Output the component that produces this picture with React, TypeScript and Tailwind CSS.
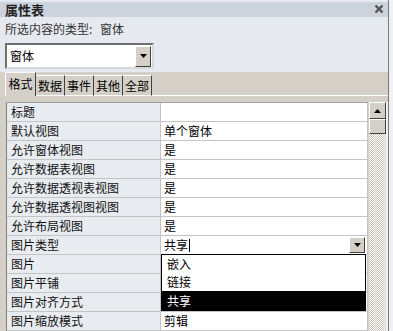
import React from "react";

const rows: [string, string][] = [
  ["标题", ""],
  ["默认视图", "单个窗体"],
  ["允许窗体视图", "是"],
  ["允许数据表视图", "是"],
  ["允许数据透视表视图", "是"],
  ["允许数据透视图视图", "是"],
  ["允许布局视图", "是"],
  ["图片类型", "共享"],
  ["图片", ""],
  ["图片平铺", ""],
  ["图片对齐方式", ""],
  ["图片缩放模式", "剪辑"],
];

const tabs = ["格式", "数据", "事件", "其他", "全部"];

function DownTri() {
  return (
    <svg width="7" height="4" viewBox="0 0 7 4">
      <path d="M0 0H7L3.5 4Z" fill="#000" />
    </svg>
  );
}

export default function App() {
  return (
    <div
      className="relative w-[393px] h-[331px] overflow-hidden bg-[#e6e9ef] flex text-[12px] leading-none text-black"
      style={{ fontFamily: '"Noto Sans CJK SC", "Noto Sans", sans-serif' }}
    >
      <div className="w-[388px] flex flex-col">
        {/* title bar */}
        <div className="mt-[2px] h-[15px] bg-[#ccd3dc] flex items-center justify-between pl-[5px] pr-[4px]">
          <span className="font-bold text-[13px] text-[#222]">属性表</span>
          <svg width="10" height="10" viewBox="0 0 10 10">
            <path d="M1.5 1.5L8.5 8.5M8.5 1.5L1.5 8.5" stroke="#555" strokeWidth="2.4" />
          </svg>
        </div>
        {/* selection type */}
        <div className="h-[25px] pl-[5px] flex items-center text-[#333] [word-spacing:5px]">所选内容的类型: 窗体</div>
        {/* combo */}
        <div className="h-[31px] pl-[5px] pt-[2px]">
          <div className="w-[149px] h-[26px] border-t-2 border-l-2 border-t-[#707070] border-l-[#707070] border-b-2 border-r-2 border-b-[#d8d8d8] border-r-[#d8d8d8] bg-white flex items-center">
            <span className="pl-[3px] flex-1">窗体</span>
            <div className="w-[16px] h-[21px] mr-[1px] bg-[#d4d0c8] border-t border-l border-t-white border-l-white border-b border-r border-b-[#404040] border-r-[#404040] flex items-center justify-center">
              <DownTri />
            </div>
          </div>
        </div>
        {/* tab area */}
        <div className="flex-1 bg-[#d4d0c8] flex flex-col">
          <div className="h-[24px] pl-[5px] flex items-end">
            {tabs.map((t, i) =>
              i === 0 ? (
                <div
                  key={t}
                  className="w-[31px] h-[24px] border-l border-t border-l-white border-t-white border-r border-r-[#404040] flex items-center justify-center pb-[1px]"
                >
                  {t}
                </div>
              ) : (
                <div
                  key={t}
                  className="w-[29px] h-[21px] border-t border-t-white border-r border-r-[#404040] border-b border-b-white flex items-center justify-center"
                >
                  {t}
                </div>
              )
            )}
            <div className="flex-1 h-[1px] bg-white" />
          </div>
          <div className="flex-1 flex pt-[6px] pl-[6px]">
            <div className="flex-1 flex flex-col border-l border-t border-l-[#808080] border-t-[#a0a0a0]">
              {rows.map(([k, v], i) => (
                <div key={k} className="h-[19px] flex shrink-0">
                  <div className="w-[153px] bg-[#e8ebf0] border-b border-b-[#c4c4c4] flex items-center pl-[4px] text-[#111]">
                    {k}
                  </div>
                  <div className="w-[1px] bg-[#c4c4c4]" />
                  <div className="flex-1 bg-white border-b border-b-[#c4c4c4] flex items-center pl-[3px] relative">
                    <span>{v}</span>
                    {i === 7 && (
                      <>
                        <div className="w-[1px] h-[13px] bg-black ml-[1px]" />
                        <div className="absolute right-[2px] top-[1px] w-[16px] h-[16px] bg-[#d4d0c8] border-t border-l border-t-white border-l-white border-b border-r border-b-[#404040] border-r-[#404040] flex items-center justify-center">
                          <DownTri />
                        </div>
                      </>
                    )}
                  </div>
                  <div className="w-[1px] bg-[#c4c4c4]" />
                </div>
              ))}
            </div>
            {/* scrollbar */}
            <div className="w-[17px] ml-[1px] flex flex-col bg-[image:repeating-conic-gradient(#ffffff_0%_25%,#c8c4bc_0%_50%)] bg-[length:2px_2px]">
              <div className="h-[17px] bg-[#d4d0c8] border-t border-l border-t-white border-l-white border-b border-r border-b-[#404040] border-r-[#404040] flex items-center justify-center">
                <svg width="7" height="4" viewBox="0 0 7 4">
                  <path d="M0 4H7L3.5 0Z" fill="#000" />
                </svg>
              </div>
              <div className="h-[15px] bg-[#d4d0c8] border-t border-l border-t-white border-l-white border-b border-r border-b-[#404040] border-r-[#404040]" />
            </div>
            <div className="w-[2px] bg-[#f0f0f0]" />
          </div>
        </div>
      </div>
      <div className="w-[1px] bg-[#7a7a7a]" />
      <div className="flex-1 bg-[#eef0f3]" />

      {/* dropdown list */}
      <div className="absolute left-[161px] top-[254px] w-[205px] h-[57px] bg-white border border-black flex flex-col">
        <div className="h-[18px] flex items-center pl-[5px]">嵌入</div>
        <div className="h-[18px] flex items-center pl-[5px]">链接</div>
        <div className="h-[19px] flex items-center pl-[5px] bg-black text-white">共享</div>
      </div>
    </div>
  );
}
